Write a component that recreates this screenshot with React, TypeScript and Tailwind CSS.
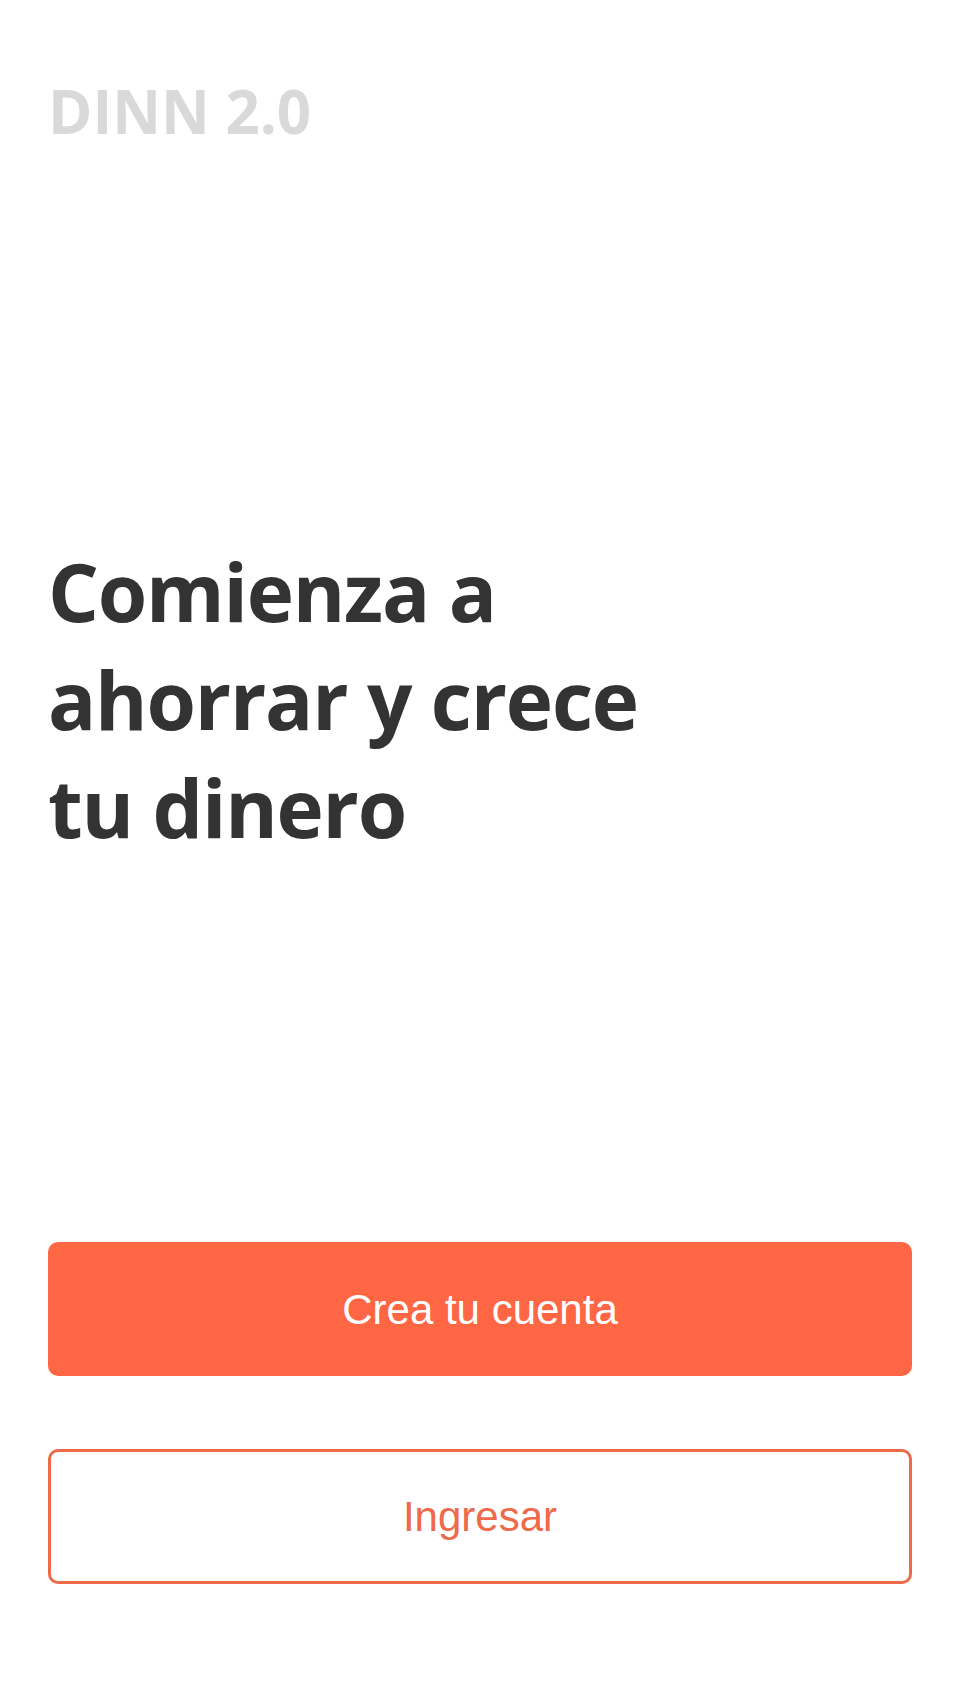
import React from "react";

export default function App() {
  return (
    <div className="min-h-[1704px] w-[960px] bg-white px-12 flex flex-col">
      <div className="pt-[81px] font-['Open_Sans',sans-serif] text-[60px] leading-none font-bold text-[#d9d9d9]">
        DINN 2.0
      </div>
      <h1 className="mt-[396px] font-['Open_Sans',sans-serif] text-[80px] leading-[108px] tracking-[-1.2px] font-bold text-[#333333]">
        Comienza a<br />ahorrar y crece<br />tu dinero
      </h1>
      <button className="mt-[381px] h-[134px] w-full rounded-[10px] bg-[#ff6644] font-['Liberation_Sans',Arial,sans-serif] text-white text-[42px] flex items-center justify-center">
        Crea tu cuenta
      </button>
      <button className="mt-[73px] h-[135px] w-full rounded-[10px] border-[3px] border-[#ee6a4a] bg-white font-['Liberation_Sans',Arial,sans-serif] text-[#ee6a4a] text-[42px] flex items-center justify-center">
        Ingresar
      </button>
    </div>
  );
}
